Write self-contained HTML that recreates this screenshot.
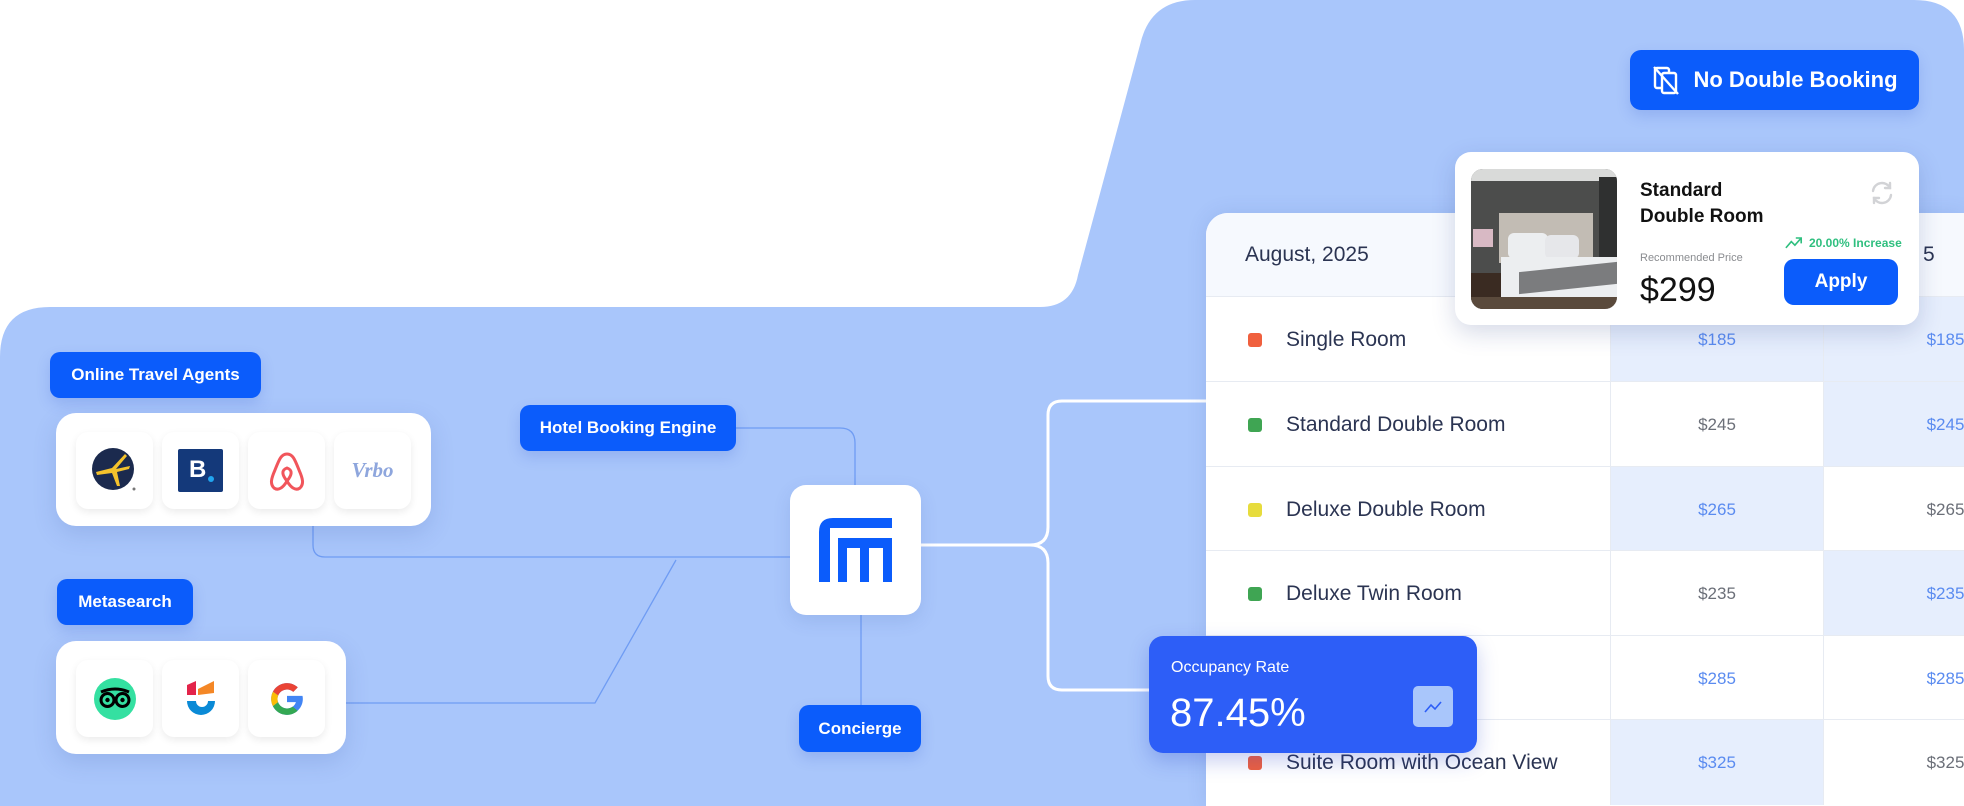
<!DOCTYPE html>
<html><head><meta charset="utf-8">
<style>
*{margin:0;padding:0;box-sizing:border-box}
html,body{width:1964px;height:806px;overflow:hidden}
body{background:#fff;font-family:"Liberation Sans",Arial,sans-serif;position:relative}
.a{position:absolute}
.pill{position:absolute;background:#0b5cfb;color:#fff;font-weight:bold;font-size:17px;border-radius:10px;display:flex;align-items:center;justify-content:center;box-shadow:0 6px 14px rgba(40,80,200,.18)}
.card{position:absolute;background:#fff;border-radius:20px;box-shadow:0 8px 24px rgba(40,70,150,.15)}
.tile{position:absolute;width:77px;height:77px;background:#fff;border-radius:12px;box-shadow:0 3px 8px rgba(0,0,0,.08);display:flex;align-items:center;justify-content:center}
.row{position:absolute;left:0;width:800px;height:85px;border-top:1px solid #e7ebf2}
.lbl{position:absolute;left:80px;top:0;height:85px;display:flex;align-items:center;font-size:21px;color:#2b3452}
.dot{position:absolute;left:42px;top:36px;width:14px;height:14px;border-radius:3px}
.c{position:absolute;top:0;height:85px;display:flex;align-items:center;justify-content:center;font-size:17px;border-left:1px solid #e7ebf2}
.c2{left:404px;width:213px}.c3{left:617px;width:244px}
.b{background:#e6eefd;color:#5a8bf0}.w{background:#fff;color:#6b6f78}
</style></head><body>
<svg class="a" style="left:0;top:0" width="1964" height="806">
<path d="M0,357 Q0,307 50,307 H1040 Q1072,307 1078,275 L1140,45 Q1150,0 1195,0 H1914 Q1964,0 1964,50 V806 H0 Z" fill="#a9c6fb"/>
<g fill="none" stroke="#6f9cf3" stroke-width="1.3">
<path d="M313,526 V545 Q313,557 325,557 H790"/>
<path d="M346,703 H595 L676,560"/>
<path d="M736,428 H840 Q855,428 855,443 V485"/>
<path d="M861,614 V705"/>
</g>
<g fill="none" stroke="#fff" stroke-width="3">
<path d="M921,545 H1030 Q1048,545 1048,527 V415 Q1048,401 1062,401 H1210"/>
<path d="M1030,545 Q1048,545 1048,563 V676 Q1048,690 1062,690 H1160"/>
</g>
</svg>

<!-- table -->
<div class="a" style="left:1206px;top:213px;width:758px;height:593px;background:#fff;border-radius:22px 0 0 0;overflow:hidden;box-shadow:0 0 20px rgba(40,70,150,.12)">
 <div class="a" style="left:0;top:0;width:800px;height:83px;background:#f6f9fe"></div>
 <div class="a" style="left:39px;top:0;height:83px;display:flex;align-items:center;font-size:21px;color:#2b3452">August, 2025</div>
 <div class="a" style="left:717px;top:0;height:83px;display:flex;align-items:center;font-size:21px;color:#2b3452">5</div>
 <div class="row" style="top:83px"><div class="dot" style="background:#f0603e"></div><div class="lbl">Single Room</div><div class="c c2 b">$185</div><div class="c c3 b">$185</div></div>
 <div class="row" style="top:168px"><div class="dot" style="background:#3fa553"></div><div class="lbl">Standard Double Room</div><div class="c c2 w">$245</div><div class="c c3 b">$245</div></div>
 <div class="row" style="top:253px"><div class="dot" style="background:#e7dc3d"></div><div class="lbl">Deluxe Double Room</div><div class="c c2 b">$265</div><div class="c c3 w">$265</div></div>
 <div class="row" style="top:337px"><div class="dot" style="background:#3fa553"></div><div class="lbl">Deluxe Twin Room</div><div class="c c2 w">$235</div><div class="c c3 b">$235</div></div>
 <div class="row" style="top:422px"><div class="dot" style="background:#3fa553"></div><div class="lbl">Family Room</div><div class="c c2 w" style="color:#5a8bf0">$285</div><div class="c c3 w" style="color:#5a8bf0">$285</div></div>
 <div class="row" style="top:506px"><div class="dot" style="background:#f0603e"></div><div class="lbl">Suite Room with Ocean View</div><div class="c c2 b">$325</div><div class="c c3 w">$325</div></div>
</div>

<!-- No double booking -->
<div class="pill" style="left:1630px;top:50px;width:289px;height:60px;font-size:22px;border-radius:11px;gap:12px">
<svg width="30" height="32" viewBox="0 0 30 32" fill="none" stroke="#fff" stroke-width="2.4" stroke-linejoin="round"><rect x="4" y="4" width="14" height="20" rx="2"/><rect x="11" y="9" width="14" height="20" rx="2" fill="#0b5cfb"/><path d="M3,3 L27,30"/></svg>
<span>No Double Booking</span></div>

<!-- popup -->
<div class="card" style="left:1455px;top:152px;width:464px;height:173px;border-radius:16px;box-shadow:0 8px 24px rgba(30,50,120,.18)">
 <div class="a" style="left:16px;top:17px;width:146px;height:140px;border-radius:12px;overflow:hidden;background:#4c4d4c">
  <div class="a" style="left:0;top:0;width:146px;height:12px;background:#d9dad9"></div>
  <div class="a" style="left:128px;top:8px;width:18px;height:110px;background:#2f3030"></div>
  <div class="a" style="left:28px;top:44px;width:94px;height:50px;background:#c2bcb4"></div>
  <div class="a" style="left:37px;top:64px;width:40px;height:26px;background:#eceef0;border-radius:6px"></div>
  <div class="a" style="left:74px;top:66px;width:34px;height:24px;background:#e6e7ea;border-radius:6px"></div>
  <div class="a" style="left:30px;top:88px;width:116px;height:52px;background:#eceef0"></div>
  <div class="a" style="left:48px;top:98px;width:98px;height:22px;background:#7b7c7e;transform:skewY(-6deg)"></div>
  <div class="a" style="left:0;top:104px;width:30px;height:36px;background:#3a2b22"></div>
  <div class="a" style="left:2px;top:60px;width:20px;height:18px;background:#d8b9c4"></div>
  <div class="a" style="left:0;top:128px;width:146px;height:12px;background:#5a4a3c"></div>
 </div>
 <div class="a" style="left:185px;top:26px;font-size:19px;font-weight:bold;line-height:26px;color:#111">Standard<br>Double Room</div>
 <svg class="a" style="left:414px;top:28px" width="26" height="26" viewBox="0 0 26 26" fill="none" stroke="#d2d3d6" stroke-width="2.4" stroke-linecap="round"><path d="M4,11 A9,9 0 0 1 21,8"/><path d="M21,3 V8 H16"/><path d="M22,15 A9,9 0 0 1 5,18"/><path d="M5,23 V18 H10"/></svg>
 <svg class="a" style="left:330px;top:84px" width="18" height="13" viewBox="0 0 20 14" fill="none" stroke="#2fbf7f" stroke-width="1.8"><path d="M1,13 L7,6 L11,10 L18,2"/><path d="M12,2 H18 V8"/></svg>
 <div class="a" style="left:354px;top:84px;font-size:12px;color:#2fbf7f;font-weight:bold">20.00% Increase</div>
 <div class="a" style="left:185px;top:100px;font-size:11px;color:#8a8c90">Recommended Price</div>
 <div class="a" style="left:185px;top:119px;font-size:34px;color:#111">$299</div>
 <div class="a" style="left:329px;top:107px;width:114px;height:46px;border-radius:10px;background:#0b5cfb;color:#fff;font-size:19px;font-weight:bold;display:flex;align-items:center;justify-content:center">Apply</div>
</div>

<!-- occupancy -->
<div class="a" style="left:1149px;top:636px;width:328px;height:117px;background:#2d5ef7;border-radius:14px;box-shadow:0 8px 20px rgba(30,60,200,.25)">
 <div class="a" style="left:22px;top:23px;font-size:16px;color:#fff">Occupancy Rate</div>
 <div class="a" style="left:21px;top:55px;font-size:40px;color:#fff">87.45%</div>
 <div class="a" style="left:264px;top:50px;width:40px;height:41px;background:#a9c6fb;border-radius:5px"><svg width="40" height="41" viewBox="0 0 40 41" fill="none" stroke="#2d5ef7" stroke-width="1.6"><path d="M12,26 L18,19 L22,23 L28,16"/></svg></div>
</div>

<!-- center logo -->
<div class="a" style="left:790px;top:485px;width:131px;height:130px;background:#fff;border-radius:16px;box-shadow:0 6px 18px rgba(40,70,150,.12)">
 <svg class="a" style="left:29px;top:33px" width="73" height="64" viewBox="0 0 73 64" fill="#0b5cfb"><path d="M0,64 V14 Q0,0 14,0 H73 V10 H11 V64 Z"/><rect x="19" y="20" width="54" height="10"/><rect x="19" y="20" width="9" height="44"/><rect x="41" y="20" width="9" height="44"/><rect x="64" y="20" width="9" height="44"/></svg>
</div>

<!-- pills -->
<div class="pill" style="left:50px;top:352px;width:211px;height:46px">Online Travel Agents</div>
<div class="pill" style="left:520px;top:405px;width:216px;height:46px">Hotel Booking Engine</div>
<div class="pill" style="left:57px;top:579px;width:136px;height:46px">Metasearch</div>
<div class="pill" style="left:799px;top:705px;width:122px;height:47px">Concierge</div>

<!-- OTA card -->
<div class="card" style="left:56px;top:413px;width:375px;height:113px">
 <div class="tile" style="left:20px;top:19px"><svg width="46" height="46" viewBox="0 0 46 46"><circle cx="21" cy="21" r="21" fill="#1b2a4e"/><path d="M4,24 L20,20 L33,6 L35,8 L24,21 L38,18 L37,21 L25,24 L28,38 L25,38 L20,25 L5,27 Z" fill="#f4c22c"/><circle cx="42" cy="41" r="1.5" fill="#777"/></svg></div>
 <div class="tile" style="left:106px;top:19px"><div style="width:45px;height:43px;background:#14397a;border-radius:2px;position:relative"><span style="position:absolute;left:11px;top:7px;color:#fff;font-weight:bold;font-size:24px">B</span><span style="position:absolute;left:30px;top:27px;width:6px;height:6px;border-radius:3px;background:#21a5f0"></span></div></div>
 <div class="tile" style="left:192px;top:19px"><svg width="40" height="42" viewBox="0 0 40 42" fill="none" stroke="#f1555b" stroke-width="3"><path d="M20,4 C14,4 12,10 8,20 C4,29 3,34 7,38 C11,41 16,38 20,31 C24,38 29,41 33,38 C37,34 36,29 32,20 C28,10 26,4 20,4 Z"/><path d="M20,31 C15,25 14,20 20,18 C26,20 25,25 20,31 Z"/></svg></div>
 <div class="tile" style="left:278px;top:19px"><span style="font-family:'Liberation Serif',serif;font-style:italic;font-weight:bold;font-size:21px;color:#8ea6dd">Vrbo</span></div>
</div>

<!-- Meta card -->
<div class="card" style="left:56px;top:641px;width:290px;height:113px">
 <div class="tile" style="left:20px;top:19px"><svg width="44" height="44" viewBox="0 0 44 44"><circle cx="22" cy="22" r="21" fill="#34e0a1"/><circle cx="14.5" cy="23" r="6.5" fill="none" stroke="#000" stroke-width="3"/><circle cx="29.5" cy="23" r="6.5" fill="none" stroke="#000" stroke-width="3"/><circle cx="14.5" cy="23" r="2.2"/><circle cx="29.5" cy="23" r="2.2"/><path d="M8,15 Q22,9 36,15" stroke="#000" stroke-width="3" fill="none"/></svg></div>
 <div class="tile" style="left:106px;top:19px"><svg width="34" height="40" viewBox="0 0 34 40"><path d="M3,6 L12,2 V16 H3 Z" fill="#e3244a"/><path d="M14,10 L30,2 V14 L14,16 Z" fill="#f48726"/><path d="M3,22 H12 A6,6 0 0 0 24,22 H31 A14,14 0 0 1 3,22 Z" fill="#0a8ad6"/></svg></div>
 <div class="tile" style="left:192px;top:19px"><svg width="38" height="38" viewBox="0 0 48 48"><path d="M43.6,20H24v8h11.3C33.7,33 29.3,36 24,36c-6.6,0-12-5.4-12-12s5.4-12,12-12c3,0,5.8,1.1,7.9,3l5.7-5.7C34,6.1,29.3,4,24,4C13,4,4,13,4,24s9,20,20,20s20-9,20-20C44,22.7,43.9,21.3,43.6,20z" fill="#4285f4"/><path d="M6.3,14.7l6.6,4.8C14.7,15.1,19,12,24,12c3,0,5.8,1.1,7.9,3l5.7-5.7C34,6.1,29.3,4,24,4C16.3,4,9.7,8.3,6.3,14.7z" fill="#ea4335"/><path d="M24,44c5.2,0,9.9-2,13.4-5.2l-6.2-5.2C29.2,35.1,26.7,36,24,36c-5.2,0-9.6-3.3-11.3-8l-6.5,5C9.5,39.6,16.2,44,24,44z" fill="#34a853"/><path d="M6.2,33 l6.5,-5 C12.2,26.8,12,25.4,12,24s0.2-2.8,0.9-4.5l-6.6-4.8C4.8,17.5,4,20.7,4,24S4.8,30.4,6.2,33z" fill="#fbbc05"/></svg></div>
</div>
</body></html>
